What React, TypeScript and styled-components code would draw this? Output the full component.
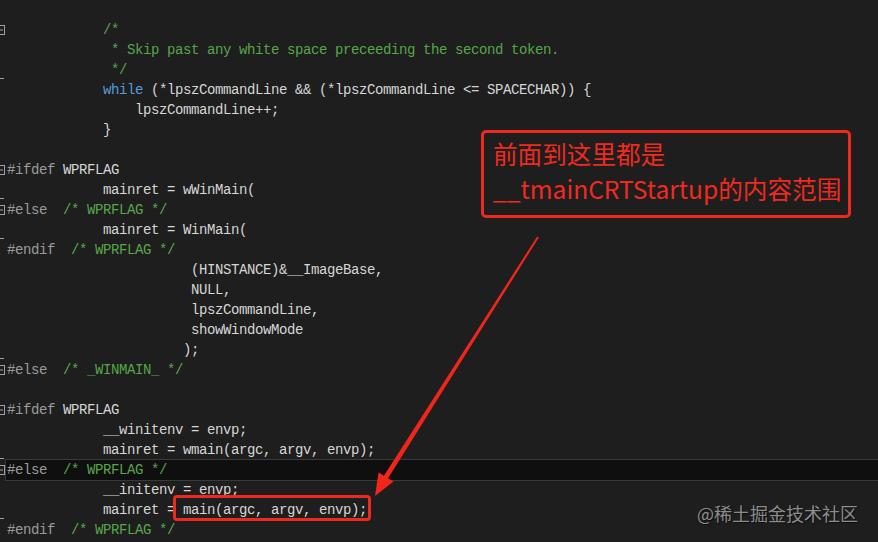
import React from "react";
import styled, { createGlobalStyle } from "styled-components";

const GlobalStyle = createGlobalStyle`
  html, body { margin: 0; padding: 0; background: #1e1e1e; }
`;

type Kind = "t" | "k" | "c" | "p";
type Fold = "none" | "open" | "end";
type LineDef = { fold: Fold; tokens: [Kind, string][]; hl?: boolean };

const I12 = "            ";

const lines: LineDef[] = [
  { fold: "none", tokens: [] },
  { fold: "open", tokens: [["t", I12], ["c", "/*"]] },
  { fold: "none", tokens: [["t", I12 + " "], ["c", "* Skip past any white space preceeding the second token."]] },
  { fold: "end", tokens: [["t", I12 + " "], ["c", "*/"]] },
  { fold: "none", tokens: [["t", I12], ["k", "while"], ["t", " (*lpszCommandLine && (*lpszCommandLine <= SPACECHAR)) {"]] },
  { fold: "none", tokens: [["t", I12 + "    lpszCommandLine++;"]] },
  { fold: "none", tokens: [["t", I12 + "}"]] },
  { fold: "none", tokens: [] },
  { fold: "open", tokens: [["p", "#ifdef "], ["t", "WPRFLAG"]] },
  { fold: "end", tokens: [["t", I12 + "mainret = wWinMain("]] },
  { fold: "open", tokens: [["p", "#else  "], ["c", "/* WPRFLAG */"]] },
  { fold: "end", tokens: [["t", I12 + "mainret = WinMain("]] },
  { fold: "none", tokens: [["p", "#endif  "], ["c", "/* WPRFLAG */"]] },
  { fold: "none", tokens: [["t", "                       (HINSTANCE)&__ImageBase,"]] },
  { fold: "none", tokens: [["t", "                       NULL,"]] },
  { fold: "none", tokens: [["t", "                       lpszCommandLine,"]] },
  { fold: "none", tokens: [["t", "                       showWindowMode"]] },
  { fold: "end", tokens: [["t", "                      );"]] },
  { fold: "open", tokens: [["p", "#else  "], ["c", "/* _WINMAIN_ */"]] },
  { fold: "none", tokens: [] },
  { fold: "open", tokens: [["p", "#ifdef "], ["t", "WPRFLAG"]] },
  { fold: "none", tokens: [["t", I12 + "__winitenv = envp;"]] },
  { fold: "end", tokens: [["t", I12 + "mainret = wmain(argc, argv, envp);"]] },
  { fold: "open", tokens: [["p", "#else  "], ["c", "/* WPRFLAG */"]], hl: true },
  { fold: "none", tokens: [["t", I12 + "__initenv = envp;"]] },
  { fold: "end", tokens: [["t", I12 + "mainret = main(argc, argv, envp);"]] },
  { fold: "none", tokens: [["p", "#endif  "], ["c", "/* WPRFLAG */"]] },
];

const colors: Record<Kind, string> = {
  t: "#d6d6d6",
  k: "#569cd6",
  c: "#57a64a",
  p: "#9b9b9b",
};

const Editor = styled.div`
  position: relative;
  width: 878px;
  height: 542px;
  overflow: hidden;
  background: #1e1e1e;
  display: flex;
  flex-direction: column;
`;

const Row = styled.div`
  display: flex;
  height: 20px;
  flex: none;
`;

const Gutter = styled.div`
  width: 5px;
  flex: none;
  display: flex;
`;

const Code = styled.div<{ $hl?: boolean }>`
  flex: 1;
  box-sizing: border-box;
  padding-left: 1px;
  white-space: pre;
  font-family: "Liberation Mono", "DejaVu Sans Mono", monospace;
  font-size: 14px;
  letter-spacing: -0.4px;
  line-height: 20px;
  color: #d6d6d6;
  background: ${(p) => (p.$hl ? "#0f0f0f" : "transparent")};
  border-top: 1px solid ${(p) => (p.$hl ? "#3a3a3a" : "transparent")};
  border-bottom: 1px solid ${(p) => (p.$hl ? "#3a3a3a" : "transparent")};
  border-left: 1px solid ${(p) => (p.$hl ? "#3a3a3a" : "transparent")};
  margin-top: -1px;
  margin-bottom: -1px;
  height: 22px;
`;

const Tok = styled.span<{ $k: Kind }>`
  color: ${(p) => colors[p.$k]};
`;

const Callout = styled.div`
  position: absolute;
  left: 481px;
  top: 130px;
  width: 370px;
  height: 88px;
  box-sizing: border-box;
  border: 3px solid #ee2a1e;
  border-radius: 5px;
  padding: 3px 0 0 9px;
  color: #f02a1e;
  font-family: "Noto Sans CJK SC", "Liberation Sans", sans-serif;
  font-size: 24.6px;
  line-height: 35px;
  white-space: nowrap;
`;

const MainBox = styled.div`
  position: absolute;
  left: 173px;
  top: 495px;
  width: 198px;
  height: 26px;
  box-sizing: border-box;
  border: 3px solid #ee2a1e;
  border-radius: 4px;
`;

const Arrow = styled.svg`
  position: absolute;
  left: 0;
  top: 0;
  width: 878px;
  height: 542px;
  pointer-events: none;
`;

const Watermark = styled.div`
  position: absolute;
  right: 20px;
  top: 501px;
  font-family: "Noto Sans CJK SC", sans-serif;
  font-size: 18px;
  line-height: 24px;
  color: #8c8c8c;
  text-shadow: 1px 1px 1px rgba(0, 0, 0, 0.6);
`;

const FoldMark: React.FC<{ fold: Fold }> = ({ fold }) => {
  if (fold === "open")
    return (
      <svg width="5" height="20" viewBox="0 0 5 20">
        <rect x="-4.5" y="5.5" width="9" height="9" fill="none" stroke="#a0a0a0" />
        <line x1="-2" y1="10" x2="3" y2="10" stroke="#a0a0a0" />
      </svg>
    );
  if (fold === "end")
    return (
      <svg width="5" height="20" viewBox="0 0 5 20">
        <line x1="0" y1="18.5" x2="4" y2="18.5" stroke="#a0a0a0" />
      </svg>
    );
  return null;
};

export default function App() {
  return (
    <>
      <GlobalStyle />
      <Editor>
        {lines.map((l, i) => (
          <Row key={i}>
            <Gutter>
              <FoldMark fold={l.fold} />
            </Gutter>
            <Code $hl={l.hl}>
              {l.tokens.map(([k, s], j) => (
                <Tok key={j} $k={k}>
                  {s}
                </Tok>
              ))}
            </Code>
          </Row>
        ))}
        <Callout>
          前面到这里都是
          <br />
          __tmainCRTStartup的内容范围
        </Callout>
        <MainBox />
        <Arrow viewBox="0 0 878 542">
          <polygon
            points="537.2,236.5 538.8,237.5 388.1,478.3 393.5,481.5 375,496 378.6,472.3 383.9,475.7"
            fill="#f0261b"
          />
        </Arrow>
        <Watermark>@稀土掘金技术社区</Watermark>
      </Editor>
    </>
  );
}
